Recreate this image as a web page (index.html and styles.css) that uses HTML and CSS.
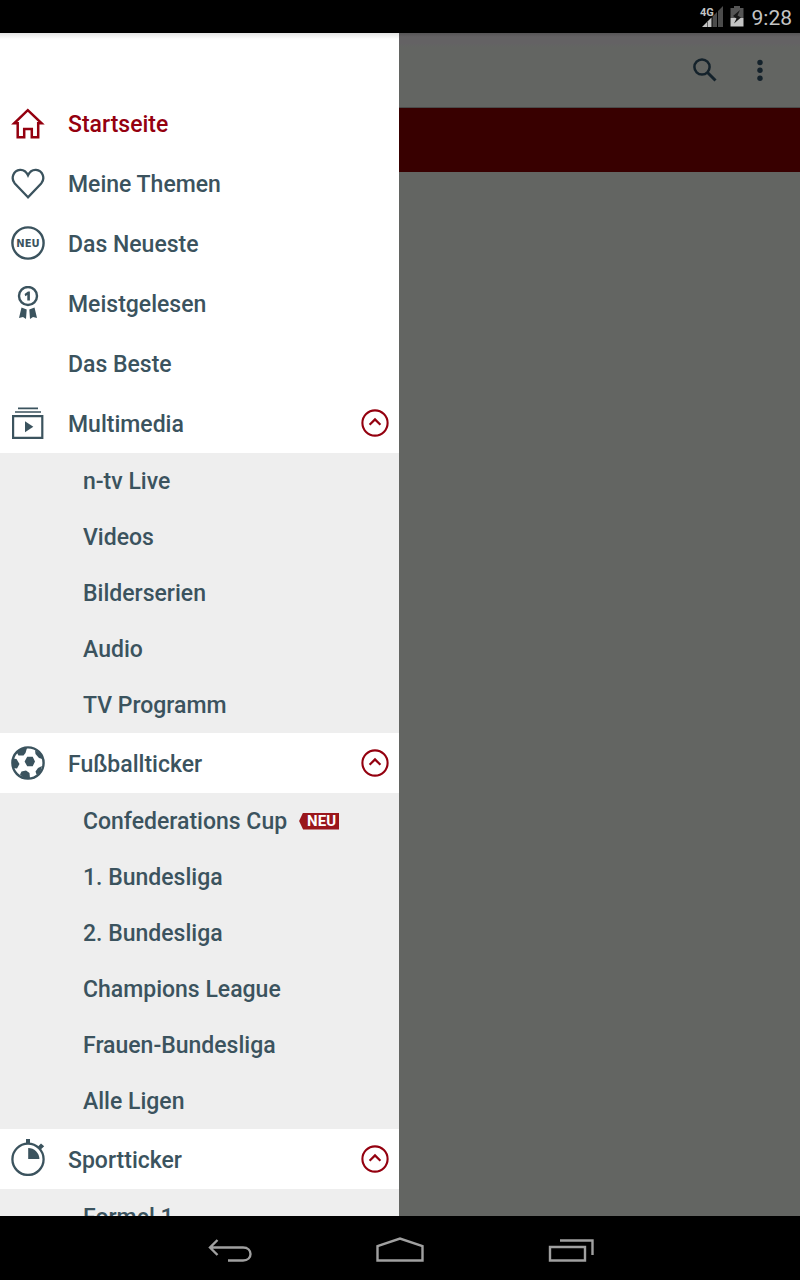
FILE: index.html
```html
<!DOCTYPE html>
<html lang="de">
<head>
<meta charset="utf-8">
<meta name="viewport" content="width=device-width, initial-scale=1">
<title>Startseite</title>
<link rel="stylesheet" href="styles.css">
</head>
<body>
<svg class="symbols" aria-hidden="true">
  <symbol id="collapse" viewBox="0 0 28 28"><circle cx="14" cy="14" r="12.6" fill="none" stroke="currentColor" stroke-width="2.1"/><path d="M8.6 15.8 14 10.4 19.4 15.8" fill="none" stroke="currentColor" stroke-width="2.2"/></symbol>
</svg>
<header class="status">
  <svg class="signal" viewBox="0 0 24 24" aria-hidden="true">
    <path d="M2 23 7 18V23Z" fill="#c4c4c4"/><path d="M7.500 17.500 11.500 13.500V23H7.500Z" fill="#c4c4c4"/>
    <path d="M12.500 12.500 17 8V23H12.500ZM18 7 23 2V23H18Z" fill="#4b4b4b"/>
    <text class="network" x="0" y="12">4G</text>
  </svg>
  <svg class="battery" viewBox="0 0 14 22" aria-hidden="true">
    <path d="M4 1H10V3H13.500V13H.5V3H4Z" fill="#555"/><path d="M.5 13H13.500V21.500H.5Z" fill="#c4c4c4"/>
    <path d="M10 5 3 11 6.500 13.500 4 18.500 11 12.500 7.500 10.500Z" fill="#181818"/>
  </svg>
  <time class="clock">9:28</time>
</header>
<div class="screen">
  <nav class="drawer" aria-label="Hauptmenü">
    <ul class="menu">
      <li><a class="item active" href="#start">
        <svg class="icon" viewBox="0 0 34 34"><path d="M6.700 17.300H3.200L16.800 4.200 30.600 17.300H27.200V31.200H20.800V23H13.200V31.200H6.700Z" fill="none" stroke="currentColor" stroke-width="2.500"/></svg>
        <span class="label">Startseite</span></a></li>
      <li><a class="item" href="#themen">
        <svg class="icon" viewBox="0 0 34 34"><path d="M17 31.300 3.800 17.500C1.600 15 1.400 11.500 2.200 9.100 4.400 2.900 13.300 1.200 17 9.200 20.700 1.200 29.600 2.900 31.800 9.100 32.600 11.500 32.400 15 30.200 17.500Z" fill="none" stroke="currentColor" stroke-width="2.300"/></svg>
        <span class="label">Meine Themen</span></a></li>
      <li><a class="item" href="#neu">
        <svg class="icon" viewBox="0 0 34 34" aria-hidden="true"><circle cx="17" cy="17" r="15.600" fill="none" stroke="currentColor" stroke-width="2.400"/><text class="round-text" x="17" y="20.500">NEU</text></svg>
        <span class="label">Das Neueste</span></a></li>
      <li><a class="item" href="#meistgelesen">
        <svg class="icon" viewBox="0 0 34 34" aria-hidden="true"><circle cx="17" cy="10" r="9" fill="none" stroke="currentColor" stroke-width="2.400"/><path d="M13.600 8 17 5.500H18.900V14.500H16.300V8.900L14.300 10.300ZM10.500 21.500 15.700 23.500 15 33 12 31 8 32ZM23.500 21.500 18.300 23.500 19 33 22 31 26 32Z" fill="currentColor"/></svg>
        <span class="label">Meistgelesen</span></a></li>
      <li><a class="item" href="#beste"><span class="icon"></span><span class="label">Das Beste</span></a></li>
      <li>
        <button class="item" type="button" aria-expanded="true">
          <svg class="icon" viewBox="0 0 34 34"><path d="M2.100 10.100H31.300V31.900H2.100Z" fill="none" stroke="currentColor" stroke-width="2.200"/><path d="M4 6H30M7 2.300H27" stroke="currentColor" stroke-width="1.700"/><path d="M14 15.300V26.300L22.300 20.800Z" fill="currentColor"/></svg>
          <span class="label">Multimedia</span><svg class="toggle"><use href="#collapse"/></svg>
        </button>
        <ul class="submenu">
          <li><a class="subitem" href="#live">n-tv Live</a></li>
          <li><a class="subitem" href="#videos">Videos</a></li>
          <li><a class="subitem" href="#bilder">Bilderserien</a></li>
          <li><a class="subitem" href="#audio">Audio</a></li>
          <li><a class="subitem" href="#tv">TV Programm</a></li>
        </ul>
      </li>
      <li>
        <button class="item" type="button" aria-expanded="true">
          <svg class="icon" viewBox="0 0 34 34"><circle cx="17" cy="17" r="15.600" fill="none" stroke="currentColor" stroke-width="2.400"/><path d="M16.200 10.800H21.700L24 15.500 21.700 20.300H16.200L13.600 15.500ZM5.500 6 11 2H16L14.500 7 12.500 9.500H7.500ZM1.500 12.500 5.500 13 8.500 18 6 22.500 2 22ZM9 28.500 10.500 25.500 15 24.500 18.500 27 19 32.500 13 32.500ZM24.500 25.500 27 22 31 20 29 27 25.500 28.500ZM24 4 29.500 8 31.500 13 28 12 24.500 8Z" fill="currentColor"/></svg>
          <span class="label">Fußballticker</span><svg class="toggle"><use href="#collapse"/></svg>
        </button>
        <ul class="submenu">
          <li><a class="subitem" href="#confed">Confederations Cup <span class="badge">NEU</span></a></li>
          <li><a class="subitem" href="#bl1">1. Bundesliga</a></li>
          <li><a class="subitem" href="#bl2">2. Bundesliga</a></li>
          <li><a class="subitem" href="#cl">Champions League</a></li>
          <li><a class="subitem" href="#frauen">Frauen-Bundesliga</a></li>
          <li><a class="subitem" href="#ligen">Alle Ligen</a></li>
        </ul>
      </li>
      <li>
        <button class="item" type="button" aria-expanded="true">
          <svg class="icon tall" viewBox="0 0 34 38"><circle cx="17" cy="21.300" r="15.600" fill="none" stroke="currentColor" stroke-width="2.300"/><path d="M15 1H19V6H15ZM26.500 9 30 5.500 33.200 8.300 29.500 11.700ZM17.200 10A11.200 11.200 0 0 1 28.400 21H17.200Z" fill="currentColor"/></svg>
          <span class="label">Sportticker</span><svg class="toggle"><use href="#collapse"/></svg>
        </button>
        <ul class="submenu">
          <li><a class="subitem" href="#f1">Formel 1</a></li>
        </ul>
      </li>
    </ul>
  </nav>
  <main class="content">
    <div class="toolbar">
      <button class="tool" type="button" aria-label="Suche"><svg width="24" height="24" viewBox="0 0 24 24"><circle cx="9" cy="9" r="7.600" fill="none" stroke="currentColor" stroke-width="2.500"/><path d="M14.500 14.500 22.500 22.500" stroke="currentColor" stroke-width="3"/></svg></button>
      <button class="tool" type="button" aria-label="Weitere Optionen"><svg width="24" height="24" viewBox="0 0 24 24" fill="currentColor"><circle cx="12" cy="4.500" r="2.700"/><circle cx="12" cy="12.300" r="2.700"/><circle cx="12" cy="20.200" r="2.700"/></svg></button>
    </div>
    <div class="banner"></div>
  </main>
</div>
<footer class="navbar">
  <button class="key" type="button" aria-label="Zurück"><svg width="48" height="32" viewBox="0 0 48 32"><path d="M6 15.500H39C49 15.500 49 28.500 39 28.500H24M13.500 8 6 15.500 13.500 23" fill="none" stroke="currentColor" stroke-width="2.400"/></svg></button>
  <button class="key" type="button" aria-label="Startbildschirm"><svg width="48" height="32" viewBox="0 0 48 32"><path d="M1.500 28.500V14L24 6.500 46.500 14V28.500Z" fill="none" stroke="currentColor" stroke-width="2.400"/></svg></button>
  <button class="key" type="button" aria-label="Letzte Apps"><svg width="48" height="32" viewBox="0 0 48 32"><path d="M2 15H37V28.500H2ZM12 8.500H44.500V23" fill="none" stroke="currentColor" stroke-width="2.400"/></svg></button>
</footer>
</body>
</html>
```
FILE: styles.css
```css
* { box-sizing: border-box; }

body {
  margin: 0;
  height: 100vh;
  display: flex;
  flex-direction: column;
  overflow: hidden;
  background: #000;
  color: #3b535e;
  font-family: Roboto, "Noto Sans", sans-serif;
}

ul { list-style: none; margin: 0; padding: 0; }

button {
  border: 0;
  padding: 0;
  background: none;
  color: inherit;
  font: inherit;
}

.symbols { display: none; }

.status {
  flex: none;
  height: 33px;
  padding: 2px 8px 0 0;
  display: flex;
  align-items: center;
  justify-content: flex-end;
  color: #c4c4c4;
}

.signal { width: 24px; height: 24px; margin: 0 6px 4px 0; overflow: visible; }
.network { font: 700 11px Roboto, sans-serif; fill: #c4c4c4; }
.battery { width: 14px; height: 22px; margin: 0 8px 4px 0; }
.clock { font-size: 21px; line-height: 32px; }

.screen { flex: 1; min-height: 0; display: flex; }

.drawer {
  flex: none;
  width: calc(50% - 1px);
  padding-top: 60px;
  overflow: hidden;
  background: linear-gradient(#e4e4e4, #fff 6px);
}

.item {
  width: 100%;
  height: 60px;
  padding: 0 10px 0 11px;
  display: flex;
  align-items: center;
  gap: 23px;
  background: #fff;
  color: inherit;
  font-size: 23px;
  font-weight: 500;
  line-height: 28px;
  text-align: left;
  text-decoration: none;
}

.active { color: #94000f; }
.icon { flex: none; width: 34px; height: 34px; }
.tall { height: 38px; margin-bottom: 4px; }
.round-text { font: 700 10px "DejaVu Sans", sans-serif; fill: currentColor; text-anchor: middle; }
.label { flex: 1; padding-top: 4px; }
.toggle { flex: none; width: 28px; height: 28px; color: #94000f; }

.submenu { background: #eee; }

.subitem {
  height: 56px;
  padding: 2px 12px 0 83px;
  display: flex;
  align-items: center;
  gap: 12px;
  color: inherit;
  font-size: 23px;
  font-weight: 500;
  line-height: 28px;
  text-decoration: none;
}

.badge {
  margin-bottom: 2px;
  padding: 0 3px 0 8px;
  background: #9a161b;
  clip-path: polygon(4px 0, 100% 0, 100% 100%, 4px 100%, 0 50%);
  color: #fff;
  font-size: 15px;
  font-weight: 700;
  line-height: 17px;
}

.content { flex: 1; background: #636562; }

.toolbar {
  height: 75px;
  padding-right: 28px;
  display: flex;
  align-items: center;
  justify-content: flex-end;
  gap: 31px;
  border-bottom: 1px solid #4a4a49;
  background: linear-gradient(#565556, #646264 4px, #646264 10px, #636562 14px);
  color: #14222b;
}

.tool { display: flex; }
.banner { height: 64px; background: #380000; }

.navbar {
  flex: none;
  height: 64px;
  display: flex;
  align-items: center;
  justify-content: center;
  gap: 124px;
  color: #a0a0a0;
}

.key { display: flex; }
```
